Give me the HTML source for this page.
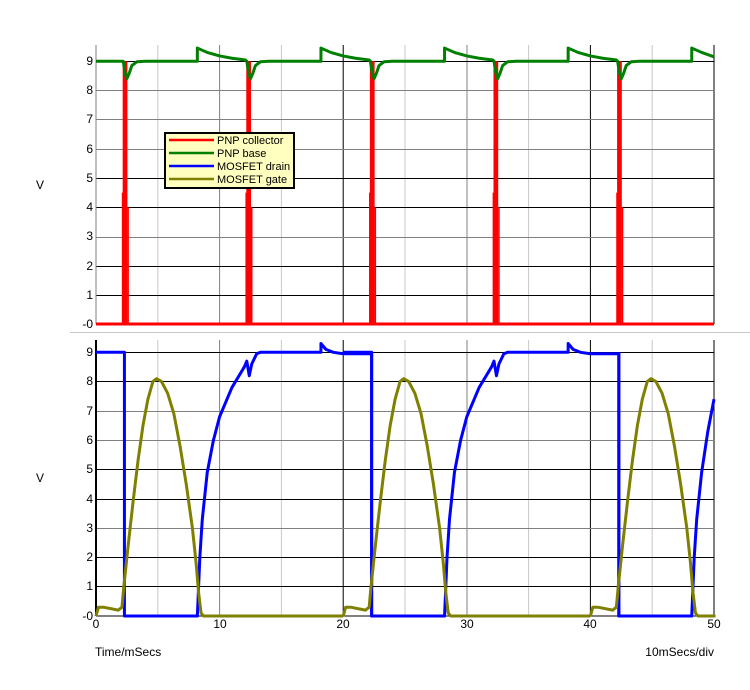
<!DOCTYPE html>
<html><head><meta charset="utf-8"><style>
body{margin:0;background:#fff;width:750px;height:690px;overflow:hidden}
svg{display:block;font-family:"Liberation Sans",sans-serif}
.s{vector-effect:non-scaling-stroke;fill:none;stroke-linejoin:round}
</style></head><body>
<svg width="750" height="690" viewBox="0 0 750 690">
<defs><clipPath id="cp"><rect x="90" y="30" width="625.5" height="600"/></clipPath></defs>
<line x1="70" y1="332.5" x2="750" y2="332.5" stroke="#c8c8c8"/>
<g stroke-width="1">
<g stroke="#c8c8c8"><line x1="157.8" y1="45" x2="157.8" y2="324"/><line x1="281.4" y1="45" x2="281.4" y2="324"/><line x1="405" y1="45" x2="405" y2="324"/><line x1="528.6" y1="45" x2="528.6" y2="324"/><line x1="652.2" y1="45" x2="652.2" y2="324"/></g>
<g stroke="#808080"><line x1="219.6" y1="45" x2="219.6" y2="324"/><line x1="467" y1="45" x2="467" y2="324"/></g>
<g stroke="#000"><line x1="343.2" y1="45" x2="343.2" y2="324"/><line x1="590.4" y1="45" x2="590.4" y2="324"/><line x1="714" y1="45" x2="714" y2="324"/></g>
<g stroke="#000"><line x1="96" y1="61.5" x2="714" y2="61.5"/><line x1="96" y1="178.5" x2="714" y2="178.5"/><line x1="96" y1="207.5" x2="714" y2="207.5"/><line x1="96" y1="266.5" x2="714" y2="266.5"/><line x1="96" y1="295.5" x2="714" y2="295.5"/></g>
<g stroke="#808080"><line x1="96" y1="90.5" x2="714" y2="90.5"/><line x1="96" y1="119.5" x2="714" y2="119.5"/><line x1="96" y1="149.5" x2="714" y2="149.5"/><line x1="96" y1="237.5" x2="714" y2="237.5"/></g>
<line x1="96" y1="45" x2="96" y2="324" stroke="#808080"/>
</g>
<g stroke-width="1">
<g stroke="#c8c8c8"><line x1="157.8" y1="340" x2="157.8" y2="616"/><line x1="281.4" y1="340" x2="281.4" y2="616"/><line x1="405" y1="340" x2="405" y2="616"/><line x1="528.6" y1="340" x2="528.6" y2="616"/><line x1="652.2" y1="340" x2="652.2" y2="616"/></g>
<g stroke="#808080"><line x1="219.6" y1="340" x2="219.6" y2="616"/><line x1="467" y1="340" x2="467" y2="616"/></g>
<g stroke="#000"><line x1="343.2" y1="340" x2="343.2" y2="616"/><line x1="590.4" y1="340" x2="590.4" y2="616"/><line x1="714" y1="340" x2="714" y2="616"/></g>
<g stroke="#000"><line x1="96" y1="352.5" x2="714" y2="352.5"/><line x1="96" y1="381.5" x2="714" y2="381.5"/><line x1="96" y1="469.5" x2="714" y2="469.5"/><line x1="96" y1="499.5" x2="714" y2="499.5"/><line x1="96" y1="557.5" x2="714" y2="557.5"/><line x1="96" y1="586.5" x2="714" y2="586.5"/><line x1="96" y1="616" x2="714" y2="616"/></g>
<g stroke="#808080"><line x1="96" y1="411.5" x2="714" y2="411.5"/><line x1="96" y1="440.5" x2="714" y2="440.5"/><line x1="96" y1="528.5" x2="714" y2="528.5"/></g>
<line x1="96" y1="340" x2="96" y2="616" stroke="#000" stroke-width="2"/>
</g>
<g clip-path="url(#cp)">
<g transform="translate(96,324) scale(12.36,29.2)">
<defs>
<g id="red"><path class="s" stroke="#f00" stroke-width="3.5" d="M2.3,0 V-9 M2.4,-9 V0"/><path class="s" stroke="#f00" stroke-width="1.5" d="M2.15,-4.5 V0 M2.6,0 V-4"/></g>
</defs>
<use href="#red"/><use href="#red" transform="translate(10,0)"/><use href="#red" transform="translate(20,0)"/><use href="#red" transform="translate(30,0)"/><use href="#red" transform="translate(40,0)"/>
<path class="s" stroke="#f00" stroke-width="3" d="M0,0 H50"/>
<path class="s" stroke="#008000" stroke-width="3" d="M0,-9 H2.2 L2.35,-8.6 L2.5,-8.4 L2.7,-8.6 L2.9,-8.85 L3.3,-8.98 L4,-9 H8.2 V-9.45 L9,-9.3 L10,-9.18 L11,-9.1 L12.1,-9.04 L12.2,-9 L12.35,-8.6 L12.5,-8.4 L12.7,-8.6 L12.9,-8.85 L13.3,-8.98 L14,-9 H18.2 V-9.45 L19,-9.3 L20,-9.18 L21,-9.1 L22.1,-9.04 L22.2,-9 L22.35,-8.6 L22.5,-8.4 L22.7,-8.6 L22.9,-8.85 L23.3,-8.98 L24,-9 H28.2 V-9.45 L29,-9.3 L30,-9.18 L31,-9.1 L32.1,-9.04 L32.2,-9 L32.35,-8.6 L32.5,-8.4 L32.7,-8.6 L32.9,-8.85 L33.3,-8.98 L34,-9 H38.2 V-9.45 L39,-9.3 L40,-9.18 L41,-9.1 L42.1,-9.04 L42.2,-9 L42.35,-8.6 L42.5,-8.4 L42.7,-8.6 L42.9,-8.85 L43.3,-8.98 L44,-9 H48.2 V-9.45 L49,-9.3 L50,-9.15"/>
</g>
<g transform="translate(96,616) scale(12.36,29.3)">
<defs>
<path id="gold" class="s" stroke="#808000" stroke-width="3" d="M0,0 L0.2,-0.3 L0.6,-0.3 L1.8,-0.2 L2.1,-0.3 L2.25,-1 L2.6,-2.4 L3,-3.9 L3.4,-5.3 L3.8,-6.5 L4.2,-7.4 L4.6,-8 L4.9,-8.1 L5.3,-8 L5.8,-7.6 L6.3,-6.9 L6.8,-5.8 L7.3,-4.5 L7.8,-3 L8.1,-1.8 L8.3,-0.8 L8.5,-0.1 L8.7,0 H20"/>
<path id="blue" class="s" stroke="#00f" stroke-width="3" d="M0,-9 H2.3 V0 H8.2 L8.4,-2 L8.6,-3.3 L9,-4.9 L9.5,-6 L10,-6.8 L11,-7.8 L12,-8.5 L12.2,-8.7 L12.4,-8.2 L12.6,-8.6 L13,-8.95 L13.3,-9 H18.2 V-9.3 L18.6,-9.1 L19.2,-9 L20,-8.95 L22.3,-8.95 V0 H28.2"/>
</defs>
<use href="#blue"/><use href="#blue" transform="translate(20,0)"/>
<path class="s" stroke="#00f" stroke-width="3" d="M42.3,-9 V0 H48.2 L48.4,-2 L48.6,-3.3 L49,-4.9 L49.5,-6.3 L50,-7.4"/>
<use href="#gold"/><use href="#gold" transform="translate(20,0)"/><use href="#gold" transform="translate(40,0)"/>
</g>
</g>
<rect x="165" y="133" width="129" height="55" fill="#ffffc0" stroke="#000" stroke-width="2"/>
<g stroke-width="2.5">
<line x1="169" y1="140" x2="214" y2="140" stroke="#f00"/>
<line x1="169" y1="153" x2="214" y2="153" stroke="#008000"/>
<line x1="169" y1="166" x2="214" y2="166" stroke="#00f"/>
<line x1="169" y1="179" x2="214" y2="179" stroke="#808000"/>
</g>
<g font-size="11" fill="#000">
<text x="217" y="144">PNP collector</text>
<text x="217" y="157">PNP base</text>
<text x="217" y="170">MOSFET drain</text>
<text x="217" y="183">MOSFET gate</text>
</g>
<g font-size="12" fill="#000" text-anchor="end">
<text x="93" y="65">9</text><text x="93" y="94">8</text><text x="93" y="123">7</text><text x="93" y="153">6</text><text x="93" y="182">5</text><text x="93" y="211">4</text><text x="93" y="240">3</text><text x="93" y="270">2</text><text x="93" y="299">1</text><text x="93" y="328">-0</text>
<text x="93" y="356">9</text><text x="93" y="385">8</text><text x="93" y="415">7</text><text x="93" y="444">6</text><text x="93" y="473">5</text><text x="93" y="503">4</text><text x="93" y="532">3</text><text x="93" y="561">2</text><text x="93" y="590">1</text><text x="93" y="620">-0</text>
</g>
<g font-size="12" fill="#000" text-anchor="middle">
<text x="96" y="628">0</text><text x="220" y="628">10</text><text x="343" y="628">20</text><text x="467" y="628">30</text><text x="590" y="628">40</text><text x="714" y="628">50</text>
</g>
<text x="36" y="189" font-size="12">V</text>
<text x="36" y="482" font-size="12">V</text>
<text x="95" y="656" font-size="12">Time/mSecs</text>
<text x="714" y="656" font-size="12" text-anchor="end">10mSecs/div</text>
</svg>
</body></html>
